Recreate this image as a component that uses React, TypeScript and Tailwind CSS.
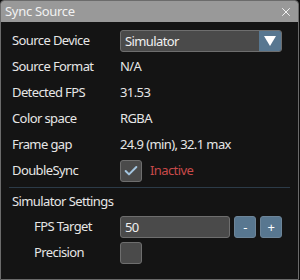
import { Check, X } from 'lucide-react'

// ── Small building blocks ────────────────────────────────────────────────────
function Label({ children, indent }: { children: React.ReactNode; indent?: boolean }) {
  return (
    <span className={`${indent ? 'pl-[22px]' : ''} w-[108px] shrink-0 text-[#e6e6e6]`}>{children}</span>
  )
}

function Row({ children }: { children: React.ReactNode }) {
  return <div className="flex h-[26px] items-center">{children}</div>
}

function Box({ checked }: { checked?: boolean }) {
  return (
    <div className="flex h-[22px] w-[22px] items-center justify-center rounded-[3px] border border-[#6e6e6e] bg-[#4a4a4a]">
      {checked && <Check size={16} strokeWidth={3} className="text-[#a3c4de]" />}
    </div>
  )
}

function StepButton({ children }: { children: React.ReactNode }) {
  return (
    <button className="flex h-[22px] w-[22px] items-center justify-center rounded-[3px] border border-[#6d8599] bg-[#587790] text-[13px] leading-none text-white">
      {children}
    </button>
  )
}

export default function App() {
  return (
    <div className="h-[280px] w-[300px] bg-[#0d0d0d] font-['Noto_Sans',sans-serif] text-[13px] tracking-[-0.6px]">
      <div className="flex h-[280px] w-[299px] flex-col overflow-hidden rounded-t-[4px] border border-[#6b6b6b] bg-[#141414]">
        {/* title bar */}
        <div className="flex h-[21px] shrink-0 items-center justify-between bg-[#999999] pl-[4px] pr-[5px] text-[#f2f2f2]">
          <span className="tracking-[-0.3px]">Sync Source</span>
          <X size={14} strokeWidth={1.5} className="text-white" />
        </div>

        {/* body */}
        <div className="flex flex-col px-[11px] pt-[6px]">
          <Row>
            <Label>Source Device</Label>
            <div className="flex h-[22px] w-[162px] overflow-hidden rounded-[3px] border border-[#6e6e6e] bg-[#4a4a4a]">
              <span className="flex-1 pl-[4px] leading-[20px] text-[#f0f0f0]">Simulator</span>
              <div className="flex w-[22px] items-center justify-center bg-[#587790]">
                <svg width="12" height="10" viewBox="0 0 12 10">
                  <polygon points="0,0 12,0 6,10" fill="#ffffff" />
                </svg>
              </div>
            </div>
          </Row>
          <Row>
            <Label>Source Format</Label>
            <span className="text-[#e6e6e6]">N/A</span>
          </Row>
          <Row>
            <Label>Detected FPS</Label>
            <span className="text-[#e6e6e6]">31.53</span>
          </Row>
          <Row>
            <Label>Color space</Label>
            <span className="text-[#e6e6e6]">RGBA</span>
          </Row>
          <Row>
            <Label>Frame gap</Label>
            <span className="text-[#e6e6e6]">24.9 (min), 32.1 max</span>
          </Row>
          <Row>
            <Label>DoubleSync</Label>
            <Box checked />
            <span className="ml-[8px] text-[#c84a4a]">Inactive</span>
          </Row>

          <div className="mx-[-3px] mt-[3px] h-px bg-[#2c3b48]" />

          <div className="flex h-[26px] items-center pt-[2px] text-[#e6e6e6]">Simulator Settings</div>
          <Row>
            <Label indent>FPS Target</Label>
            <div className="h-[22px] w-[110px] rounded-[3px] border border-[#6e6e6e] bg-[#4a4a4a] pl-[4px] leading-[20px] text-[#f0f0f0]">
              50
            </div>
            <div className="ml-[4px] flex gap-[4px]">
              <StepButton>-</StepButton>
              <StepButton>+</StepButton>
            </div>
          </Row>
          <Row>
            <Label indent>Precision</Label>
            <Box />
          </Row>
        </div>
      </div>
    </div>
  )
}
